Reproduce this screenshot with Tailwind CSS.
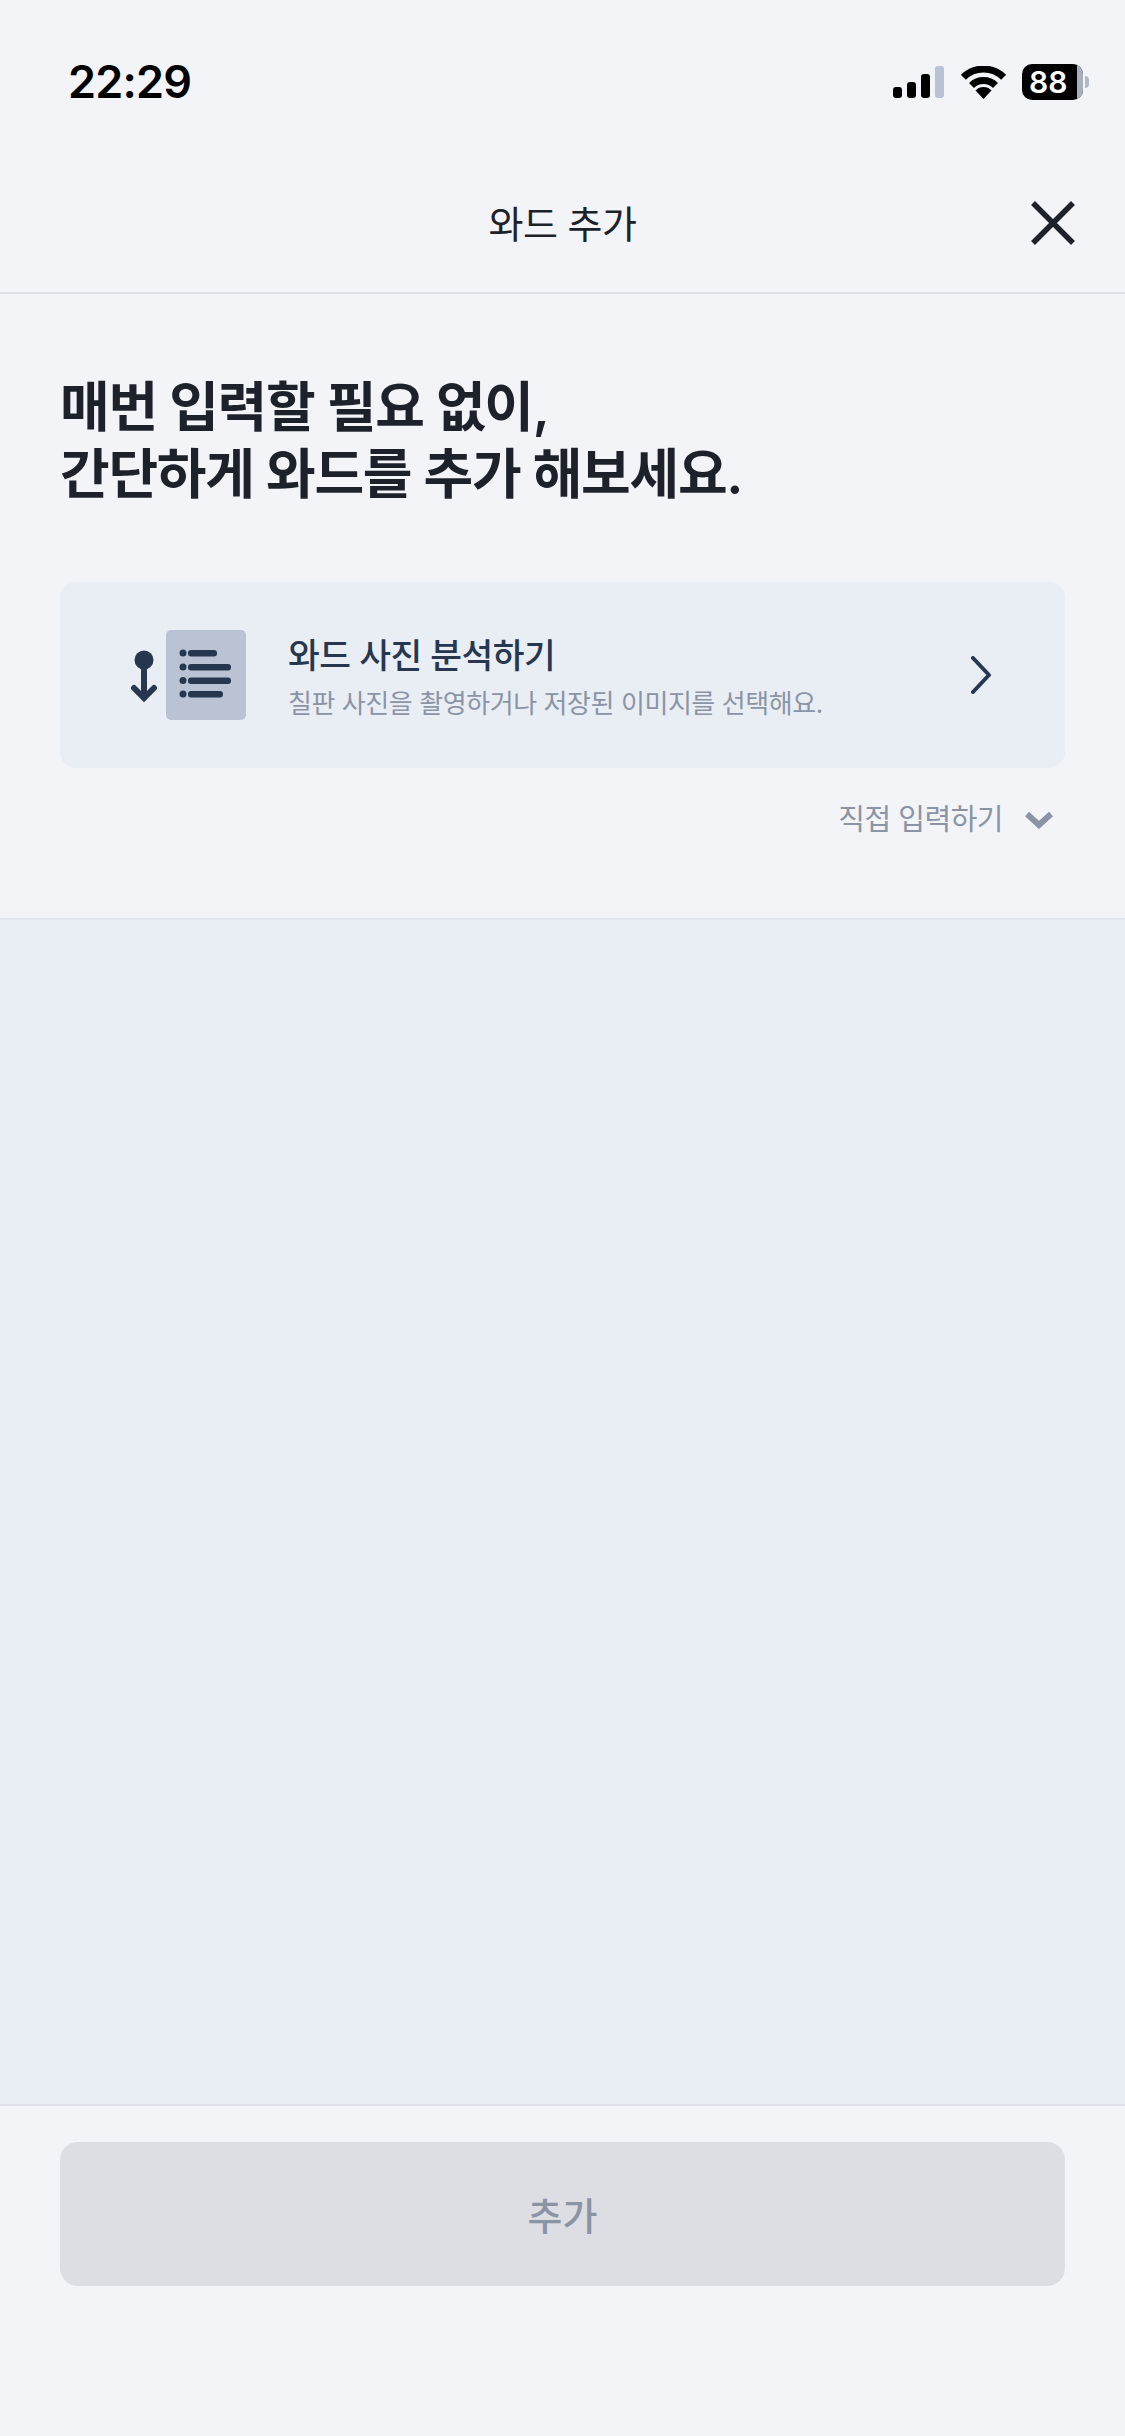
<!DOCTYPE html>
<html lang="ko">
<head>
    <meta charset="UTF-8">
    <meta name="viewport" content="width=device-width, initial-scale=1.0">
    <title>와드 추가</title>
    <script src="https://cdn.jsdelivr.net/npm/@tailwindcss/browser@4"></script>
</head>
<body class="bg-[#f2f4f8] font-['Inter','Noto_Sans_CJK_KR',sans-serif]">
<div class="flex flex-col w-[1125px] h-[2436px] overflow-hidden">

    <!-- status bar -->
    <div class="h-[156px] shrink-0 flex items-start justify-between pt-[58px] pl-[68px] pr-[36px]">
        <span class="text-[45px] leading-[48px] font-semibold text-black tracking-[-0.8px]">22:29</span>
        <div class="flex items-center mt-[-1px] h-[50px]">
            <svg class="w-[51px] h-[32px]" viewBox="0 0 51 32" fill="#000">
                <rect x="0" y="21" width="9" height="11" rx="3"/>
                <rect x="14" y="16" width="9" height="16" rx="3"/>
                <rect x="28" y="8" width="9" height="24" rx="3"/>
                <rect x="42" y="0" width="9" height="32" rx="3" fill="#b8c2d4"/>
            </svg>
            <svg class="w-[45px] h-[33px] ml-[17px]" viewBox="0 0 45 33" fill="none" stroke="#000" stroke-width="7">
                <path d="M2.35 11.35A28.5 28.5 0 0 1 42.65 11.35"/>
                <path d="M10.5 19.5A17 17 0 0 1 34.5 19.5"/>
                <path d="M22.5 33L14.5 24.5A11 11 0 0 1 30.5 24.5Z" fill="#000" stroke="none"/>
            </svg>
            <div class="flex items-center ml-[16px]">
                <div class="relative w-[61px] h-[36px] rounded-[10px] bg-black overflow-hidden flex items-center pl-[7px]">
                    <div class="absolute right-0 top-0 w-[6px] h-full bg-[#a9afba]"></div>
                    <span class="relative text-[30px] leading-[36px] font-semibold text-white">88</span>
                </div>
                <div class="w-[4px] h-[12px] ml-[2px] rounded-r-full bg-[#b4bac5]"></div>
            </div>
        </div>
    </div>

    <!-- header -->
    <header class="relative h-[138px] shrink-0 flex items-center justify-center border-b-[2px] border-[#dfe1e6]">
        <h1 class="text-[38px] leading-[48px] font-normal text-[#1d2129] tracking-[-0.5px]">와드 추가</h1>
        <button class="absolute right-[50px] top-[45px]">
            <svg class="w-[44px] h-[44px]" viewBox="0 0 44 44" fill="none" stroke="#1d2129" stroke-width="5.5">
                <path d="M2 2L42 42M42 2L2 42"/>
            </svg>
        </button>
    </header>

    <!-- intro -->
    <section class="shrink-0 h-[626px] border-b-[2px] border-[#e2e6ee] px-[60px] pt-[80px]">
        <h2 class="text-[54px] leading-[67px] font-semibold text-[#1d2129] tracking-[-1.27px]">매번 입력할 필요 없이,<br>간단하게 와드를 추가 해보세요.</h2>

        <div class="mt-[74px] h-[186px] rounded-[16px] bg-[#e9eef5] flex items-center pl-[70px] pr-[74px]">
            <svg class="w-[116px] h-[90px] shrink-0" viewBox="0 0 116 90" fill="none">
                <circle cx="14" cy="30" r="9.5" fill="#27374f"/>
                <path d="M14 34V68M4 58L14 68L24 58" stroke="#27374f" stroke-width="6" stroke-linecap="round"/>
                <rect x="36" y="0" width="80" height="90" rx="5" fill="#b9c3d4"/>
                <g fill="#27374f">
                    <circle cx="53" cy="23" r="3.5"/><rect x="58" y="20" width="29" height="6.5" rx="3"/>
                    <circle cx="53" cy="37" r="3.5"/><rect x="58" y="34" width="43" height="6.5" rx="3"/>
                    <circle cx="53" cy="50.5" r="3.5"/><rect x="58" y="47.5" width="43" height="6.5" rx="3"/>
                    <circle cx="53" cy="64" r="3.5"/><rect x="58" y="61" width="35" height="6.5" rx="3"/>
                </g>
            </svg>
            <div class="ml-[42px] flex-1 min-w-0 flex flex-col gap-[8px] mt-[6px]">
                <p class="text-[34.5px] leading-[44px] font-medium text-[#27374f] tracking-[-0.5px]">와드 사진 분석하기</p>
                <p class="text-[26px] leading-[36px] text-[#8b94a5] tracking-[-0.43px]">칠판 사진을 촬영하거나 저장된 이미지를 선택해요.</p>
            </div>
            <svg class="w-[20px] h-[38px] shrink-0" viewBox="0 0 20 38" fill="none" stroke="#27374f" stroke-width="4" stroke-linecap="round" stroke-linejoin="round">
                <path d="M2 2L18 19L2 36"/>
            </svg>
        </div>

        <div class="mt-[32px] flex items-center justify-end pr-[12px]">
            <span class="text-[29px] leading-[40px] text-[#8b94a5] tracking-[-0.5px]">직접 입력하기</span>
            <svg class="w-[28px] h-[18px] ml-[22px]" viewBox="0 0 28 18" fill="none" stroke="#8b94a5" stroke-width="6">
                <path d="M2 3L14 14L26 3"/>
            </svg>
        </div>
    </section>

    <!-- empty list -->
    <main class="flex-1 bg-[#e9eef5]"></main>

    <!-- footer -->
    <footer class="shrink-0 h-[332px] border-t-[2px] border-[#dfe2e8] px-[60px] pt-[36px]">
        <button class="w-full h-[144px] rounded-[18px] bg-[#dddee3] pt-[5px] text-[38px] font-medium text-[#8b94a5]">추가</button>
    </footer>
</div>
</body>
</html>
